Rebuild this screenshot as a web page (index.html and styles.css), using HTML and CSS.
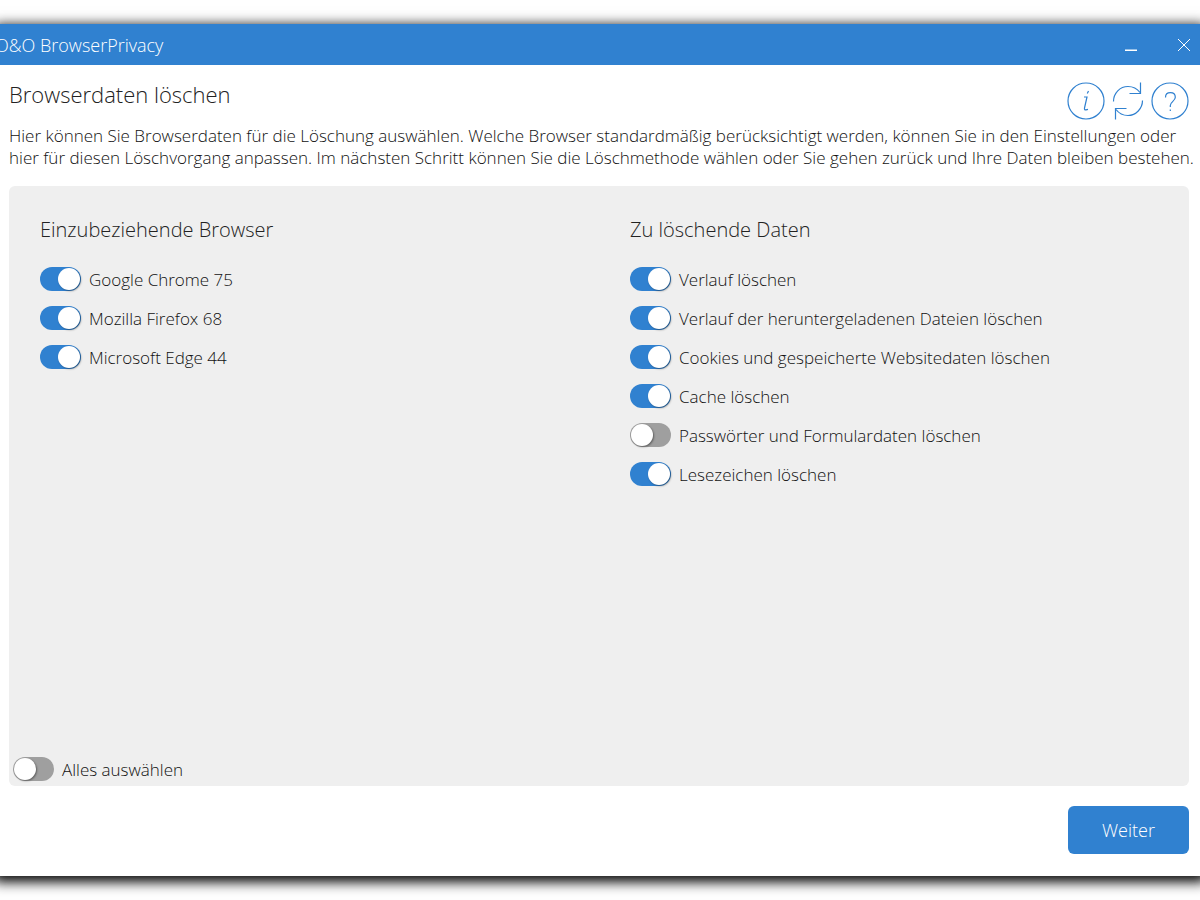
FILE: index.html
```html
<!DOCTYPE html>
<html lang="de">
<head>
    <meta charset="UTF-8">
    <meta name="viewport" content="width=device-width, initial-scale=1.0">
    <title>O&amp;O BrowserPrivacy</title>
    <link rel="stylesheet" href="styles.css">
</head>
<body>

<div class="window">
    <header class="titlebar">
        <span class="app-name">O&amp;O BrowserPrivacy</span>
        <button type="button" class="window-button" aria-label="Minimieren">
            <svg width="14" height="14" viewBox="0 0 14 14"><path d="M1 12.250h12" stroke-width="1.500"/></svg>
        </button>
        <button type="button" class="window-button" aria-label="Schließen">
            <svg width="14" height="14" viewBox="0 0 14 14"><path d="M1 1l12 12M13 1L1 13"/></svg>
        </button>
    </header>

    <main class="content">
        <div class="heading">
            <h1>Browserdaten löschen</h1>
            <div class="tools">
                <button type="button" class="tool" aria-label="Info">
                    <svg width="38" height="38" viewBox="0 0 38 38">
                        <circle cx="19" cy="19" r="18"/>
                        <path d="M21.500 9l-1.200 2.500M17 15h3l-2.500 11c-.3 1.400.3 2 1.500 1.800l2-.4"/>
                    </svg>
                </button>
                <button type="button" class="tool" aria-label="Aktualisieren">
                    <svg width="32" height="40" viewBox="0 0 32 40">
                        <path d="M1.500 20.500C1.500 12 8 5.500 16 5.500c5 0 9 2 12 6M30.500 19.500c0 8-6.500 15-14.500 15-5 0-9-2-12-6"/>
                        <path d="M28.500 1.500v11H17.500M3.500 38.500V27.500h11"/>
                    </svg>
                </button>
                <button type="button" class="tool" aria-label="Hilfe">
                    <svg width="38" height="38" viewBox="0 0 38 38">
                        <circle cx="19" cy="19" r="18"/>
                        <path d="M14.500 15.500c0-2.900 1.900-4.800 4.900-4.800s4.900 1.800 4.900 4.600c0 3.900-5 4.200-5 8.300v1.400M19.300 27.500v1.500"/>
                    </svg>
                </button>
            </div>
        </div>

        <p class="intro">Hier können Sie Browserdaten für die Löschung auswählen. Welche Browser standardmäßig berücksichtigt werden, können Sie in den Einstellungen oder<br>
        hier für diesen Löschvorgang anpassen. Im nächsten Schritt können Sie die Löschmethode wählen oder Sie gehen zurück und Ihre Daten bleiben bestehen.</p>

        <form id="cleanForm" class="form">
            <div class="panel">
                <div class="columns">
                    <section>
                        <h2>Einzubeziehende Browser</h2>
                        <label class="option"><input type="checkbox" name="chrome" checked><span>Google Chrome 75</span></label>
                        <label class="option"><input type="checkbox" name="firefox" checked><span>Mozilla Firefox 68</span></label>
                        <label class="option"><input type="checkbox" name="edge" checked><span>Microsoft Edge 44</span></label>
                    </section>
                    <section>
                        <h2>Zu löschende Daten</h2>
                        <label class="option"><input type="checkbox" name="history" checked><span>Verlauf löschen</span></label>
                        <label class="option"><input type="checkbox" name="downloads" checked><span>Verlauf der heruntergeladenen Dateien löschen</span></label>
                        <label class="option"><input type="checkbox" name="cookies" checked><span>Cookies und gespeicherte Websitedaten löschen</span></label>
                        <label class="option"><input type="checkbox" name="cache" checked><span>Cache löschen</span></label>
                        <label class="option"><input type="checkbox" name="passwords"><span>Passwörter und Formulardaten löschen</span></label>
                        <label class="option"><input type="checkbox" name="bookmarks" checked><span>Lesezeichen löschen</span></label>
                    </section>
                </div>
                <label class="option select-all"><input type="checkbox" name="all"><span>Alles auswählen</span></label>
            </div>
            <div class="actions">
                <button type="submit" class="next">Weiter</button>
            </div>
        </form>
    </main>
</div>

</body>
</html>
```
FILE: styles.css
```css
* {
    box-sizing: border-box;
}
body {
    margin: 0;
    padding: 24px 0;
    min-height: 100vh;
    display: flex;
    flex-direction: column;
    overflow-x: hidden;
    background-color: white;
    color: #111;
    font-family: "Open Sans", "Noto Sans", sans-serif;
    font-weight: 300;
    font-size: 17px;
    line-height: 22px;
}
h1, h2, p {
    margin: 0;
    font-weight: 300;
    color: #222;
}
button {
    font: inherit;
    border: none;
    padding: 0;
    cursor: pointer;
}
svg {
    display: block;
    fill: none;
    stroke: currentColor;
}
/* the window runs a little past both edges of the screen */
.window {
    flex: 1;
    display: flex;
    flex-direction: column;
    margin: 0 -5px;
    background-color: white;
    box-shadow: 0 0 12px rgba(0, 0, 0, 0.5), 0 5px 12px 1px rgba(0, 0, 0, 0.9);
}
.titlebar {
    display: flex;
    align-items: center;
    height: 41px;
    padding-right: 14px;
    background-color: #3081d0;
    color: white;
}
.app-name {
    flex: 1;
    font-size: 18px;
}
.window-button {
    margin-left: 39px;
    background: none;
    color: white;
}
.content {
    flex: 1;
    display: flex;
    flex-direction: column;
    padding: 15px 16px 22px 14px;
}
.heading {
    display: flex;
    justify-content: space-between;
    height: 45px;
}
h1 {
    font-size: 22px;
    line-height: 28px;
}
.tools {
    display: flex;
    align-items: center;
    gap: 7px;
    height: 42px;
}
.tool {
    background: none;
    color: #3081d0;
}
.tool svg {
    stroke-width: 1.2;
}
.intro {
    white-space: nowrap;
    color: #111;
}
.form {
    flex: 1;
    display: flex;
    flex-direction: column;
}
.panel {
    flex: 1;
    display: flex;
    flex-direction: column;
    margin-top: 17px;
    padding: 30px 0 5px;
    background-color: #efefef;
    border-radius: 6px;
}
.columns {
    flex: 1;
    display: grid;
    grid-template-columns: 1fr 1fr;
}
.columns section {
    padding-left: 31px;
}
h2 {
    margin-bottom: 23px;
    font-size: 20px;
    line-height: 28px;
}
.option {
    display: flex;
    align-items: center;
    gap: 8px;
    height: 24px;
    margin-bottom: 15px;
}
.option input {
    appearance: none;
    display: flex;
    width: 41px;
    height: 24px;
    margin: 0;
    padding: 1px;
    border-radius: 12px;
    background-color: #9f9f9f;
}
.option input::before {
    content: "";
    width: 22px;
    height: 22px;
    border-radius: 50%;
    background-color: white;
    box-shadow: 1px 1px 2px rgba(0, 0, 0, 0.4);
}
.option input:checked {
    justify-content: flex-end;
    background-color: #3081d0;
}
.option span {
    padding-top: 2px;
}
.select-all {
    margin: 0 0 0 4px;
}
.actions {
    display: flex;
    justify-content: flex-end;
    margin-top: 20px;
}
.next {
    width: 121px;
    height: 48px;
    border-radius: 6px;
    background-color: #3081d0;
    color: white;
    font-size: 18px;
}
```
